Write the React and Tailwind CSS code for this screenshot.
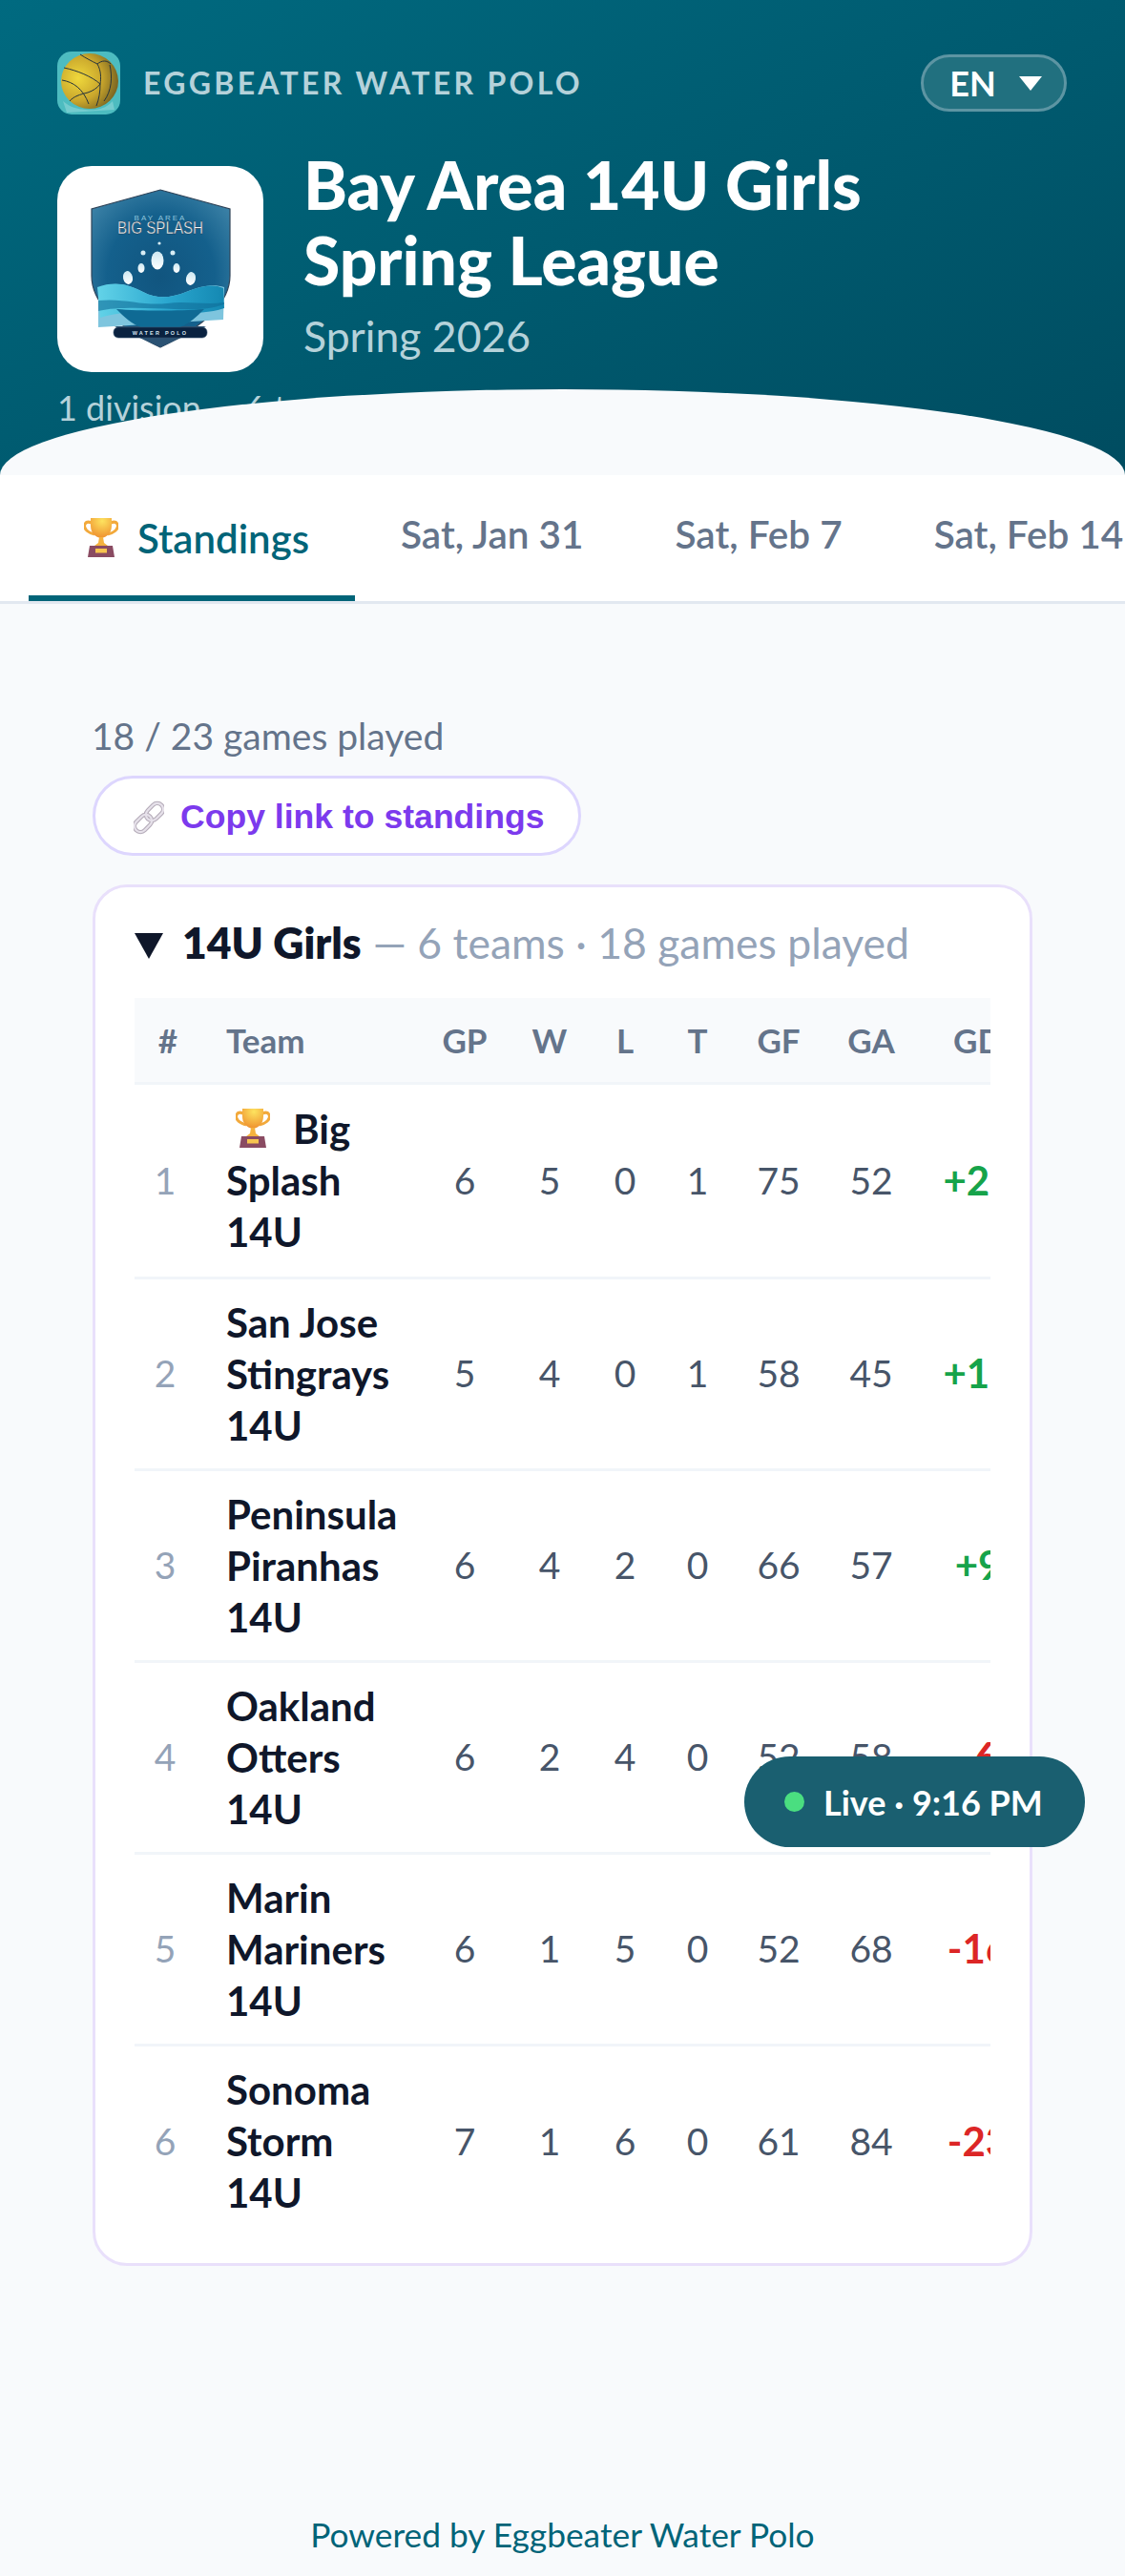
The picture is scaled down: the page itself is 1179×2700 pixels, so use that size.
const teams = [
  { rank: 1, name: ["Big", "Splash", "14U"], gp: 6, w: 5, l: 0, t: 1, gf: 75, ga: 52, gd: "+23", champ: true },
  { rank: 2, name: ["San Jose", "Stingrays", "14U"], gp: 5, w: 4, l: 0, t: 1, gf: 58, ga: 45, gd: "+13" },
  { rank: 3, name: ["Peninsula", "Piranhas", "14U"], gp: 6, w: 4, l: 2, t: 0, gf: 66, ga: 57, gd: "+9" },
  { rank: 4, name: ["Oakland", "Otters", "14U"], gp: 6, w: 2, l: 4, t: 0, gf: 52, ga: 58, gd: "-6" },
  { rank: 5, name: ["Marin", "Mariners", "14U"], gp: 6, w: 1, l: 5, t: 0, gf: 52, ga: 68, gd: "-16" },
  { rank: 6, name: ["Sonoma", "Storm", "14U"], gp: 7, w: 1, l: 6, t: 0, gf: 61, ga: 84, gd: "-23" },
];

const Trophy = ({ id, className }) => (
  <svg viewBox="0 0 36 42" className={className}>
    <defs>
      <radialGradient id={id} cx="0.55" cy="0.15" r="0.9">
        <stop offset="0" stopColor="#fde35f" />
        <stop offset="1" stopColor="#ee8c2c" />
      </radialGradient>
    </defs>
    <path d="M8 5C1 2-1 8 2 12c2 3 6 4 9 5" fill="none" stroke="#f2a93b" strokeWidth="3" />
    <path d="M28 5c7-3 9 3 6 7-2 3-6 4-9 5" fill="none" stroke="#f2a93b" strokeWidth="3" />
    <path d="M7 0h22v8c0 8-5 12-11 13C12 20 7 16 7 8z" fill={`url(#${id})`} />
    <path d="M16 20h4l1 6 4 3H11l4-3z" fill="#f5b23e" />
    <path d="M6 29h24l2 12H4z" fill="#8a4b62" />
    <rect x="12" y="32" width="12" height="4.5" fill="#f7c44f" />
  </svg>
);

const LinkIcon = () => (
  <svg viewBox="0 0 36 40" className="h-[36px] w-[32px] shrink-0">
    <g fill="none" transform="rotate(-45 18 20)">
      <rect x="-3" y="13" width="23" height="14" rx="7" stroke="#b5acb9" strokeWidth="5" />
      <rect x="16" y="13" width="23" height="14" rx="7" stroke="#b5acb9" strokeWidth="5" />
      <rect x="-3" y="13" width="23" height="14" rx="7" stroke="#e6e1ea" strokeWidth="2.5" />
      <rect x="16" y="13" width="23" height="14" rx="7" stroke="#e6e1ea" strokeWidth="2.5" />
    </g>
  </svg>
);

const BallIcon = () => (
  <svg viewBox="0 0 66 66" className="h-[66px] w-[66px] shrink-0 rounded-[15px]">
    <defs>
      <radialGradient id="ball" cx="0.3" cy="0.45" r="0.75">
        <stop offset="0" stopColor="#efd83c" />
        <stop offset="0.55" stopColor="#c9a62c" />
        <stop offset="1" stopColor="#6d5a20" />
      </radialGradient>
    </defs>
    <rect width="66" height="66" fill="#4dbcc0" />
    <ellipse cx="34" cy="31" rx="30" ry="29" fill="url(#ball)" />
    <g fill="none" stroke="#26343c" strokeWidth="1">
      <path d="M7 17c14 3 29 9 38 17" />
      <path d="M5 30c12 2 22 9 28 25" />
      <path d="M45 34c0 8-1 15-4 23" />
      <path d="M42 13c4 7 4 15 3 21" />
      <path d="M24 3c6 4 12 7 18 10 5-4 10-4 14 0" />
      <path d="M45 34c-3 4-7 7-13 9-8 2-15 4-19 9" />
      <path d="M55 14c3 13 2 27-6 38" />
    </g>
    <path d="M6 52c8 7 15 8 24 9s20 0 28-9l2 9-50 3z" fill="#7fd0d2" opacity="0.8" />
  </svg>
);

const ShieldLogo = () => (
  <svg viewBox="0 0 216 216" className="h-[216px] w-[216px]">
    <defs>
      <radialGradient id="shield" cx="0.5" cy="0.55" r="0.65">
        <stop offset="0" stopColor="#11557f" />
        <stop offset="0.6" stopColor="#14608c" />
        <stop offset="1" stopColor="#3b81a6" />
      </radialGradient>
      <linearGradient id="wave" x1="0" x2="1">
        <stop offset="0" stopColor="#63d3e8" />
        <stop offset="0.55" stopColor="#2aa7cf" />
        <stop offset="1" stopColor="#1488b2" />
      </linearGradient>
      <linearGradient id="drop" x1="0" x2="0" y1="0" y2="1">
        <stop offset="0" stopColor="#cde8f2" />
        <stop offset="1" stopColor="#ffffff" />
      </linearGradient>
    </defs>
    <path d="M108 25 181 45V115C181 145 150 170 108 190 66 170 36 145 36 115V45Z" fill="url(#shield)" stroke="#2f4358" strokeWidth="1.2" />
    <path d="M60 168h96l-48 22z" fill="#2b5273" />
    <text x="108" y="57" textAnchor="middle" fontFamily="Liberation Sans" fontSize="8" letterSpacing="2" fill="#8fc4dc">BAY AREA</text>
    <text x="108" y="71" textAnchor="middle" fontFamily="Liberation Sans" fontSize="18" textLength="90" lengthAdjust="spacingAndGlyphs" fill="#f4f8fa" stroke="#1c2c3c" strokeWidth="0.4">BIG SPLASH</text>
    <ellipse cx="105" cy="99" rx="6.5" ry="9.5" fill="url(#drop)" />
    <ellipse cx="88" cy="107" rx="3.5" ry="5" fill="url(#drop)" />
    <ellipse cx="125" cy="107" rx="3.5" ry="5" fill="url(#drop)" />
    <ellipse cx="74" cy="117" rx="5" ry="7" fill="url(#drop)" transform="rotate(-12 74 117)" />
    <ellipse cx="140" cy="118" rx="5" ry="7" fill="url(#drop)" transform="rotate(12 140 118)" />
    <circle cx="90" cy="91" r="2.5" fill="#d7edf5" />
    <circle cx="121" cy="91" r="2.5" fill="#d7edf5" />
    <circle cx="107" cy="81" r="1.6" fill="#d7edf5" />
    <path d="M43 128C60 120 75 124 90 132s30 6 45 0 28-9 40-5l-1 34-131 8z" fill="#7ec5de" />
    <path d="M42 127C60 120 75 124 90 132s30 6 45 0 28-9 39-4l1 21c-15 5-30 5-50 5-25 0-50-4-80 5z" fill="url(#wave)" />
    <path d="M43 152c20-5 55-3 80-2 20 1 38 0 52-5v-2c-20 3-40-2-60 1-25 3-45-6-72-3z" fill="#0f6d98" opacity="0.6" />
    <path d="M62 150c25 2 65 2 92 0-8 8-16 16-28 20H90c-12-4-20-12-28-20z" fill="#0f6a94" />
    <rect x="59" y="169" width="98" height="11" rx="5" fill="#0a2240" stroke="#33506c" strokeWidth="0.6" />
    <text x="108" y="177" textAnchor="middle" fontFamily="Liberation Sans" fontWeight="700" fontSize="5.5" letterSpacing="2.2" fill="#d5e4ee">WATER POLO</text>
  </svg>
);

const App = () => {
  return (
    <div className="relative flex min-h-[2700px] flex-col bg-[#f8fafc] font-[Lato,sans-serif] text-[#0f172a]">
      <header className="relative h-[498px] shrink-0 overflow-hidden bg-gradient-to-br from-[#006a80] to-[#004c60] px-[60px] pt-[54px]">
        <div className="flex h-[66px] items-center justify-between">
          <div className="flex items-center gap-[24px]">
            <BallIcon />
            <span className="text-[32px] font-bold tracking-[3.3px] text-[#b5d2da]">EGGBEATER WATER POLO</span>
          </div>
          <button className="mr-[1px] flex h-[60px] w-[153px] items-center justify-center gap-[24px] rounded-full border-[3px] border-[#5d95a3] bg-[#21707f] pl-[4px] text-[36px] font-bold text-white">
            EN
            <span className="h-0 w-0 border-x-[12px] border-t-[15px] border-x-transparent border-t-white" />
          </button>
        </div>
        <div className="mt-[54px] flex gap-[42px]">
          <div className="flex h-[216px] w-[216px] shrink-0 items-center justify-center rounded-[36px] bg-white">
            <ShieldLogo />
          </div>
          <div className="-mt-[20px]">
            <h1 className="text-[69.5px] font-black leading-[79px] text-white">
              Bay Area 14U Girls
              <br />
              Spring League
            </h1>
            <p className="mt-[12px] text-[44.5px] leading-[56px] text-[#b5d2da]">Spring 2026</p>
          </div>
        </div>
        <p className="mt-[13px] text-[36px] leading-[48px] text-[#b5d2da]">1 division &nbsp;·&nbsp; 6 teams</p>
        <div className="absolute inset-x-0 bottom-0 h-[90px] rounded-[50%_50%_0_0/100%_100%_0_0] bg-[#f8fafc]" />
      </header>

      <nav className="flex h-[135px] shrink-0 items-stretch overflow-hidden whitespace-nowrap border-b-[3px] border-[#e2e8f0] bg-white pl-[30px] text-[40.5px] font-semibold text-[#64748b]">
        <div className="flex w-[342px] shrink-0 items-center gap-[20px] border-b-[6px] border-[#006478] pl-[58px] pt-[6px] text-[42px] text-[#006478]">
          <Trophy id="tab-cup" className="h-[42px] w-[36px]" />
          Standings
        </div>
        <div className="flex items-center px-[48px] pb-[8px]">Sat, Jan 31</div>
        <div className="flex items-center px-[48px] pb-[8px]">Sat, Feb 7</div>
        <div className="flex items-center px-[48px] pb-[8px]">Sat, Feb 14</div>
      </nav>

      <main className="px-[97px] pt-[112px]">
        <p className="-ml-[1px] text-[39px] leading-[52px] text-[#64748b]">18 / 23 games played</p>
        <button className="mt-[16px] flex h-[84px] w-[512px] items-center gap-[17px] rounded-full border-[3px] border-[#ddd6fe] bg-white pl-[40px] pt-[4px] font-['Liberation_Sans',sans-serif] text-[35.6px] font-bold text-[#7c3aed]">
          <LinkIcon />
          Copy link to standings
        </button>

        <section className="mt-[30px] h-[1448px] rounded-[36px] border-[3px] border-[#e9e0fb] bg-white px-[41px] pt-[28px]">
          <div className="flex h-[88px] items-start text-[44.5px] leading-[60px]">
            <span className="mr-[20px] mt-[20px] h-0 w-0 border-x-[15px] border-t-[27px] border-x-transparent border-t-[#0f172a]" />
            <span className="font-extrabold">14U Girls</span>
            <span className="ml-[12px] text-[#94a3b8]">— 6 teams · 18 games played</span>
          </div>

          <div className="overflow-hidden">
            <table className="w-[949px] table-fixed border-collapse text-center text-[39px] text-[#475569]">
              <colgroup>
                <col className="w-[70px]" />
                <col className="w-[225px]" />
                <col className="w-[102px]" />
                <col className="w-[76px]" />
                <col className="w-[82px]" />
                <col className="w-[70px]" />
                <col className="w-[100px]" />
                <col className="w-[94px]" />
                <col className="w-[130px]" />
              </colgroup>
              <thead>
                <tr className="h-[89px] border-b-[3px] border-[#f1f5f9] bg-[#f8fafc] text-[35px] font-bold text-[#64748b]">
                  <th>#</th>
                  <th className="pl-[26px] text-left">Team</th>
                  <th>GP</th>
                  <th>W</th>
                  <th>L</th>
                  <th>T</th>
                  <th>GF</th>
                  <th>GA</th>
                  <th>GD</th>
                </tr>
              </thead>
              <tbody>
                {teams.map((team) => (
                  <tr key={team.rank} className={`${team.champ ? "h-[204px]" : "h-[201px]"} border-b-[3px] border-[#f1f5f9] last:border-b-0`}>
                    <td className="pr-[6px] text-[#94a3b8]">{team.rank}</td>
                    <td className="pl-[26px] text-left text-[42px] font-bold leading-[54px] text-[#0f172a]">
                      {team.name.map((line, i) => (
                        <div key={line} className="flex items-center">
                          {team.champ && i === 0 && <Trophy id="row-cup" className="ml-[10px] mr-[24px] h-[42px] w-[36px]" />}
                          {line}
                        </div>
                      ))}
                    </td>
                    <td>{team.gp}</td>
                    <td>{team.w}</td>
                    <td>{team.l}</td>
                    <td>{team.t}</td>
                    <td>{team.gf}</td>
                    <td>{team.ga}</td>
                    <td className={team.gd.startsWith("+") ? "text-[42px] font-bold text-[#16a34a]" : "text-[42px] font-bold text-[#dc2626]"}>{team.gd}</td>
                  </tr>
                ))}
              </tbody>
            </table>
          </div>
        </section>
      </main>

      <footer className="mt-auto pb-[19px] text-center text-[35.3px] leading-[48px] text-[#006478]">Powered by Eggbeater Water Polo</footer>

      <div className="fixed bottom-[764px] right-[42px] flex h-[95px] w-[357px] items-center gap-[20px] rounded-full bg-[#1a5f70] pl-[42px] text-[36px] font-bold text-white">
        <span className="h-[21px] w-[21px] rounded-full bg-[#4ade80]" />
        Live · 9:16 PM
      </div>
    </div>
  );
};

export default App;
